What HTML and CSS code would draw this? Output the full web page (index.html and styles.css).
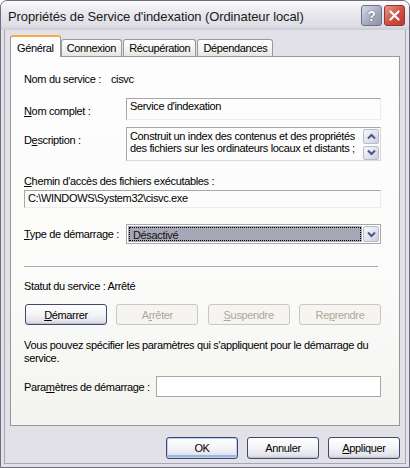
FILE: index.html
```html
<!DOCTYPE html>
<html lang="fr">
<head>
    <meta charset="UTF-8">
    <title>Propriétés de Service d'indexation</title>
    <link rel="stylesheet" href="styles.css">
</head>
<body>

<div class="window">
    <div class="titlebar">
        <span class="title">Propriétés de Service d'indexation (Ordinateur local)</span>
        <div class="caption-buttons">
            <span class="cap-btn help">?</span>
            <span class="cap-btn close">
                <svg width="21" height="21" viewBox="0 0 21 21">
                    <path d="M6 6 L15 15 M15 6 L6 15" stroke="#fff" stroke-width="2.4" stroke-linecap="round"/>
                </svg>
            </span>
        </div>
    </div>

    <div class="client">
        <div class="tabs">
            <div class="tab active">Général</div>
            <div class="tab">Connexion</div>
            <div class="tab">Récupération</div>
            <div class="tab">Dépendances</div>
        </div>

        <div class="panel">
            <div class="service-row">
                <span>Nom du service :</span>
                <span class="service-name">cisvc</span>
            </div>

            <div class="form-row name-row">
                <label class="label"><u>N</u>om complet :</label>
                <div class="field readonly">Service d'indexation</div>
            </div>

            <div class="form-row desc-row">
                <label class="label">D<u>e</u>scription :</label>
                <div class="field memo">
                    <div class="memo-text">Construit un index des contenus et des propriétés<br>des fichiers sur les ordinateurs locaux et distants ;</div>
                    <div class="scroll">
                        <span class="sb">
                            <svg width="9" height="7" viewBox="0 0 9 7"><path d="M1 5.5 L4.5 2 L8 5.5" fill="none" stroke="#4a5a7e" stroke-width="2"/></svg>
                        </span>
                        <span class="sb">
                            <svg width="9" height="7" viewBox="0 0 9 7"><path d="M1 1.5 L4.5 5 L8 1.5" fill="none" stroke="#4a5a7e" stroke-width="2"/></svg>
                        </span>
                    </div>
                </div>
            </div>

            <div class="caption"><u>C</u>hemin d'accès des fichiers exécutables :</div>
            <div class="field path">C:\WINDOWS\System32\cisvc.exe</div>

            <div class="form-row type-row">
                <label class="label"><u>T</u>ype de démarrage :</label>
                <div class="combo">
                    <span class="combo-value"><span class="focus-rect">Désactivé</span></span>
                    <span class="combo-btn">
                        <svg width="9" height="7" viewBox="0 0 9 7"><path d="M1 1.5 L4.5 5 L8 1.5" fill="none" stroke="#4a5a7e" stroke-width="2"/></svg>
                    </span>
                </div>
            </div>

            <div class="separator"></div>

            <div class="status">Statut du service : Arrêté</div>

            <div class="svc-buttons">
                <button class="btn"><u>D</u>émarrer</button>
                <button class="btn" disabled>A<u>r</u>rêter</button>
                <button class="btn" disabled><u>S</u>uspendre</button>
                <button class="btn" disabled>Re<u>p</u>rendre</button>
            </div>

            <p class="note">Vous pouvez spécifier les paramètres qui s'appliquent pour le démarrage du<br>service.</p>

            <div class="form-row params-row">
                <label class="label">Para<u>m</u>ètres de démarrage :</label>
                <div class="field input"></div>
            </div>
        </div>

        <div class="actions">
            <button class="btn default">OK</button>
            <button class="btn">Annuler</button>
            <button class="btn"><u>A</u>ppliquer</button>
        </div>
    </div>
</div>

</body>
</html>
```

FILE: styles.css
```css
body {
    margin: 0;
    background: #ffffff;
    font-family: "Liberation Sans", Arial, sans-serif;
    font-size: 11px;
    letter-spacing: -0.35px;
    color: #000;
}

u {
    text-decoration: underline;
    text-underline-offset: 1px;
}

.window {
    width: 410px;
    height: 468px;
    box-sizing: border-box;
    background: #e2e1e8;
    border: 1px solid #6f6e80;
    border-radius: 7px 7px 0 0;
    box-shadow: inset 0 0 0 3px #e2e1e8, inset 0 0 0 4px #a6a5b4;
    display: flex;
    flex-direction: column;
}

/* title bar */
.titlebar {
    height: 29px;
    flex: none;
    display: flex;
    align-items: center;
    justify-content: space-between;
    padding: 0 4px 0 7px;
    border-radius: 6px 6px 0 0;
    background: linear-gradient(#fbfbfc, #e9e9ee 40%, #dedee5 85%, #cbcbd5);
}

.title {
    font-size: 13px;
    letter-spacing: -0.1px;
    color: #1a1a1a;
    padding-top: 1px;
}

.caption-buttons {
    display: flex;
    gap: 2px;
}

.cap-btn {
    width: 21px;
    height: 21px;
    box-sizing: border-box;
    border-radius: 3px;
    display: flex;
    align-items: center;
    justify-content: center;
}

.help {
    border: 1px solid #6b7089;
    background: linear-gradient(135deg, #d7dae6, #a2a7bd 60%, #8e93ab);
    color: #fff;
    font-weight: bold;
    font-size: 14px;
    letter-spacing: 0;
    text-shadow: 0 0 1px #444b66, 0 0 1px #444b66;
}

.close {
    border: 1px solid #8a3a33;
    background: linear-gradient(135deg, #e89a8e, #cf4f3f 55%, #b83a2c);
}

/* client area */
.client {
    flex: 1;
    padding: 5px 9px 0;
    display: flex;
    flex-direction: column;
}

.tabs {
    display: flex;
    align-items: flex-end;
    height: 21px;
    position: relative;
    z-index: 1;
}

.tab {
    height: 17px;
    box-sizing: border-box;
    padding: 2px 5px 0;
    margin-right: 1px;
    border: 1px solid #919b9c;
    border-bottom: none;
    border-radius: 3px 3px 0 0;
    background: linear-gradient(#ffffff, #f2f2f0 60%, #e6e5e0);
    color: #000;
}

.tab.active {
    height: 22px;
    margin-bottom: -1px;
    padding: 5px 6px 0;
    background: #fcfcfe;
    border-top: 2px solid #f4ac45;
    margin-right: 0;
}

.panel {
    height: 370px;
    box-sizing: border-box;
    border: 1px solid #919b9c;
    background: linear-gradient(#fdfdfd, #fbfbfa 60%, #f3f3ef);
    padding: 16px 18px 0 13px;
}

.service-row {
    display: flex;
    gap: 10px;
    height: 13px;
    line-height: 13px;
}

.form-row {
    display: grid;
    grid-template-columns: 102px 1fr;
}

.label {
    white-space: nowrap;
}

.field {
    box-sizing: border-box;
    line-height: 13px;
    padding-left: 3px;
}

.readonly,
.path {
    border-top: 1px solid #a7a6aa;
    border-left: 1px solid #a7a6aa;
    border-right: 1px solid #ececec;
    border-bottom: 1px solid #ececec;
}

.name-row {
    margin-top: 12px;
}

.name-row .label {
    padding-top: 7px;
}

.readonly {
    height: 22px;
    padding-top: 1px;
}

.desc-row {
    margin-top: 7px;
}

.desc-row .label {
    padding-top: 7px;
}

.memo {
    height: 34px;
    border: 1px solid #a7a6aa;
    border-right-color: #d9d9d9;
    border-bottom-color: #d9d9d9;
    display: flex;
    justify-content: space-between;
    padding-top: 2px;
}

.memo-text {
    line-height: 12px;
    white-space: nowrap;
    overflow: hidden;
}

.scroll {
    display: flex;
    flex-direction: column;
    gap: 2px;
    margin-right: 1px;
    margin-top: -1px;
}

.sb {
    width: 16px;
    height: 15px;
    box-sizing: border-box;
    border: 1px solid #b7bccc;
    border-radius: 2px;
    background: linear-gradient(135deg, #f6f7fb, #dfe2ec 60%, #c9cddc);
    display: flex;
    align-items: center;
    justify-content: center;
}

.caption {
    margin-top: 14px;
    line-height: 13px;
}

.path {
    margin-top: 2px;
    height: 18px;
    padding-top: 1px;
}

.type-row {
    margin-top: 16px;
    align-items: center;
}

.combo {
    height: 20px;
    box-sizing: border-box;
    border: 1px solid #a7a6aa;
    background: #fff;
    display: flex;
    padding: 1px;
}

.combo-value {
    flex: 1;
    background: #a8a7b6;
    padding: 1px;
    margin-right: 1px;
}

.focus-rect {
    display: block;
    height: 100%;
    box-sizing: border-box;
    border: 1px dotted #000;
    padding-left: 3px;
    line-height: 14px;
    color: #111;
}

.combo-btn {
    width: 16px;
    box-sizing: border-box;
    border: 1px solid #b7bccc;
    border-radius: 2px;
    background: linear-gradient(135deg, #f6f7fb, #dfe2ec 60%, #c9cddc);
    display: flex;
    align-items: center;
    justify-content: center;
}

.separator {
    margin-top: 22px;
    margin-right: 3px;
    border-top: 1px solid #a7a6aa;
    border-bottom: 1px solid #ffffff;
}

.status {
    margin-top: 12px;
    line-height: 13px;
}

.svc-buttons {
    margin-top: 11px;
    display: flex;
    justify-content: space-between;
    padding-left: 1px;
}

.btn {
    width: 82px;
    height: 21px;
    padding: 0;
    font-family: inherit;
    font-size: 11px;
    letter-spacing: inherit;
    color: #000;
    border: 1px solid #3b4a6e;
    border-radius: 3px;
    background: linear-gradient(#ffffff, #f4f4f7 50%, #e3e3ea 85%, #cfcfd9);
    box-shadow: inset 0 -1px 0 #c4c4d0;
}

.btn:disabled {
    color: #aca899;
    border-color: #c9c7bf;
    background: #f5f4f0;
    box-shadow: none;
}

.btn:disabled u {
    text-decoration-color: #aca899;
}

.note {
    margin: 14px 0 0;
    line-height: 13px;
    white-space: nowrap;
}

.params-row {
    margin-top: 11px;
    grid-template-columns: 132px 1fr;
    align-items: center;
}

.input {
    height: 21px;
    border: 1px solid #a7a6aa;
    background: #fff;
}

/* bottom buttons */
.actions {
    display: flex;
    justify-content: flex-end;
    gap: 9px;
    margin-top: 11px;
}

.actions .btn {
    width: 72px;
    height: 22px;
}

.btn.default {
    box-shadow: inset 0 0 0 1px #bcd0ef, inset 0 -2px 0 1px #9fb6e0;
}
```
